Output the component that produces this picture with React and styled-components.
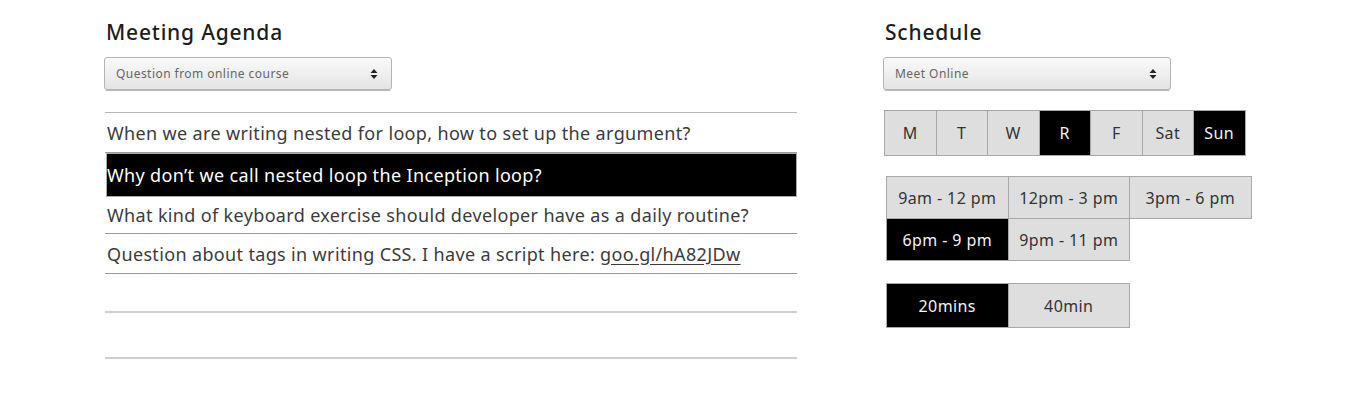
import React from "react";
import styled, { createGlobalStyle } from "styled-components";

const Global = createGlobalStyle`
  html, body { margin: 0; padding: 0; background: #fff; }
  body { font-family: "Noto Sans", "Open Sans", sans-serif; color: #222; }
`;

const Page = styled.div`
  display: flex;
  padding: 18px 0 0 105px;
  gap: 87px;
  width: 1350px;
  height: 416px;
  box-sizing: border-box;
`;

const Column = styled.section`
  display: flex;
  flex-direction: column;
  width: ${(p) => p.$w}px;
`;

const Title = styled.h2`
  margin: 0 0 0 1px;
  font-size: 21px;
  font-weight: 500;
  line-height: 28px;
  letter-spacing: 0.8px;
  color: #1d1d1d;
`;

const Select = styled.div`
  margin-top: 11px;
  width: 288px;
  height: 33px;
  box-sizing: border-box;
  display: flex;
  align-items: center;
  justify-content: space-between;
  padding: 0 13px 0 11px;
  border: 1px solid #b4b4b4;
  border-radius: 3px;
  background: linear-gradient(#fafafa, #e4e4e4);
  box-shadow: 0 2px 1px -1px rgba(0, 0, 0, 0.3);
  font-size: 12px;
  letter-spacing: 0.45px;
  color: #666;
  margin-left: ${(p) => p.$ml || 0}px;
`;

const Rows = styled.div`
  margin-top: 22px;
  border-top: 1px solid #b8b8b8;
  display: flex;
  flex-direction: column;
`;

const Row = styled.div`
  height: ${(p) => p.$h}px;
  box-sizing: border-box;
  display: flex;
  align-items: center;
  font-size: 18px;
  letter-spacing: 0.35px;
  color: ${(p) => (p.$active ? "#fff" : "#3c3c3c")};
  background: ${(p) => (p.$active ? "#000" : "transparent")};
  border-bottom: ${(p) => (p.$empty ? "2px solid #cfcfcf" : "1px solid #9a9a9a")};
  ${(p) => (p.$active ? "border: 1px solid #aaa; margin-left: 1px;" : "padding-left: 2px;")}
`;

const Link = styled.span`
  text-decoration: underline;
  text-underline-offset: 3px;
  margin-left: 5px;
`;

const ButtonGrid = styled.div`
  display: grid;
  grid-template-columns: repeat(${(p) => p.$cols}, ${(p) => p.$cw}px);
  grid-auto-rows: ${(p) => p.$rh}px;
  margin-top: ${(p) => p.$mt}px;
  margin-left: ${(p) => p.$ml || 0}px;
`;

const Toggle = styled.div`
  box-sizing: border-box;
  display: flex;
  align-items: center;
  justify-content: center;
  border: 1px solid #a8a8a8;
  margin: 0 -1px -1px 0;
  font-size: 16px;
  letter-spacing: 0.4px;
  background: ${(p) => (p.$on ? "#000" : "#dedede")};
  color: ${(p) => (p.$on ? "#f2f2f2" : "#333")};
`;

const Arrows = () => (
  <svg width="8" height="14" viewBox="0 0 8 14">
    <path d="M4 2 L7.5 6 L0.5 6 Z" fill="#222" />
    <path d="M4 12 L7.5 8 L0.5 8 Z" fill="#222" />
  </svg>
);

const days = [
  ["M", false],
  ["T", false],
  ["W", false],
  ["R", true],
  ["F", false],
  ["Sat", false],
  ["Sun", true],
];
const times = [
  ["9am - 12 pm", false],
  ["12pm - 3 pm", false],
  ["3pm - 6 pm", false],
  ["6pm - 9 pm", true],
  ["9pm - 11 pm", false],
];
const durations = [
  ["20mins", true],
  ["40min", false],
];

export default function App() {
  return (
    <>
      <Global />
      <Page>
        <Column $w={692}>
          <Title>Meeting Agenda</Title>
          <Select $ml={-1}>
            <span>Question from online course</span>
            <Arrows />
          </Select>
          <Rows>
            <Row $h={40}>When we are writing nested for loop, how to set up the argument?</Row>
            <Row $h={44} $active>
              Why don’t we call nested loop the Inception loop?
            </Row>
            <Row $h={37}>What kind of keyboard exercise should developer have as a daily routine?</Row>
            <Row $h={40}>
              Question about tags in writing CSS. I have a script here:
              <Link>goo.gl/hA82JDw</Link>
            </Row>
            <Row $h={39} $empty />
            <Row $h={46} $empty />
          </Rows>
        </Column>
        <Column $w={380}>
          <Title>Schedule</Title>
          <Select $ml={-1}>
            <span>Meet Online</span>
            <Arrows />
          </Select>
          <ButtonGrid $cols={7} $cw={51.5} $rh={45} $mt={20}>
            {days.map(([d, on]) => (
              <Toggle key={d} $on={on}>
                {d}
              </Toggle>
            ))}
          </ButtonGrid>
          <ButtonGrid $cols={3} $cw={121.5} $rh={42} $mt={21} $ml={2}>
            {times.map(([t, on]) => (
              <Toggle key={t} $on={on}>
                {t}
              </Toggle>
            ))}
          </ButtonGrid>
          <ButtonGrid $cols={3} $cw={121.5} $rh={44} $mt={23} $ml={2}>
            {durations.map(([t, on]) => (
              <Toggle key={t} $on={on}>
                {t}
              </Toggle>
            ))}
          </ButtonGrid>
        </Column>
      </Page>
    </>
  );
}
